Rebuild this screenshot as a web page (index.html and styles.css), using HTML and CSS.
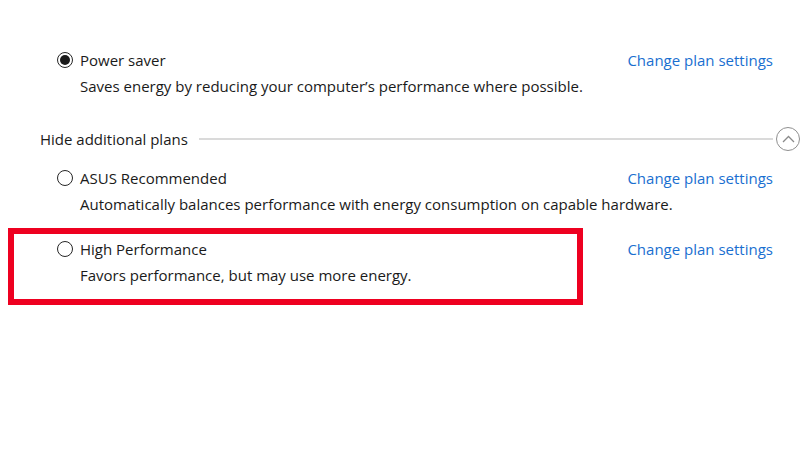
FILE: index.html
```html
<!DOCTYPE html>
<html lang="en">
<head>
    <meta charset="UTF-8">
    <title>Power Options</title>
    <link rel="stylesheet" href="styles.css">
</head>
<body>
    <div class="plans">
        <div class="plan plan-first">
            <div class="plan-head">
                <label class="plan-name"><span class="radio checked"></span>Power saver</label>
                <a class="plan-link" href="#">Change plan settings</a>
            </div>
            <p class="plan-desc">Saves energy by reducing your computer’s performance where possible.</p>
        </div>

        <div class="divider">
            <span class="divider-text">Hide additional plans</span>
            <span class="divider-line"></span>
            <span class="divider-toggle">
                <svg width="13" height="8" viewBox="0 0 13 8"><path d="M1 7 L6.5 1.5 L12 7" fill="none" stroke="#8a8a8a" stroke-width="1.3"/></svg>
            </span>
        </div>

        <div class="plan plan-asus">
            <div class="plan-head">
                <label class="plan-name"><span class="radio"></span>ASUS Recommended</label>
                <a class="plan-link" href="#">Change plan settings</a>
            </div>
            <p class="plan-desc">Automatically balances performance with energy consumption on capable hardware.</p>
        </div>

        <div class="plan plan-high">
            <div class="plan-head">
                <label class="plan-name"><span class="radio"></span>High Performance</label>
                <a class="plan-link" href="#">Change plan settings</a>
            </div>
            <p class="plan-desc">Favors performance, but may use more energy.</p>
        </div>
    </div>

    <!-- annotation box -->
    <div class="highlight"></div>
</body>
</html>
```

FILE: styles.css
```css
body {
    margin: 0;
    background: #fff;
    font-family: "Open Sans", "Noto Sans", sans-serif;
    font-size: 15px;
    color: #1a1a1a;
    width: 800px;
    height: 450px;
    overflow: hidden;
    position: relative;
}

.plans {
    padding: 47px 27px 0 40px;
}

.plan-head {
    display: flex;
    justify-content: space-between;
    align-items: center;
    height: 26px;
}

.plan-name {
    display: flex;
    align-items: center;
    padding-left: 17px;
}

.radio {
    width: 14px;
    height: 14px;
    border: 1px solid #262626;
    border-radius: 50%;
    margin-right: 7px;
    position: relative;
}

.radio.checked::after {
    content: "";
    position: absolute;
    left: 2px;
    top: 2px;
    width: 10px;
    height: 10px;
    border-radius: 50%;
    background: #1a1a1a;
}

.plan-link {
    color: #1a6fd0;
    text-decoration: none;
}

.plan-desc {
    margin: 0;
    padding-left: 40px;
    line-height: 26px;
}

.divider {
    display: flex;
    align-items: center;
    height: 26px;
    margin: 27px -27px 13px 0;
}

.divider-line {
    flex: 1;
    height: 2px;
    background: #dadada;
    margin: 0 3px 0 11px;
}

.divider-toggle {
    width: 22px;
    height: 22px;
    border: 1px solid #8f8f8f;
    border-radius: 50%;
    display: flex;
    align-items: center;
    justify-content: center;
}

.plan-high {
    margin-top: 19px;
}

.highlight {
    position: absolute;
    left: 8px;
    top: 228px;
    width: 563px;
    height: 65px;
    border: 6px solid #ee0020;
}
```
